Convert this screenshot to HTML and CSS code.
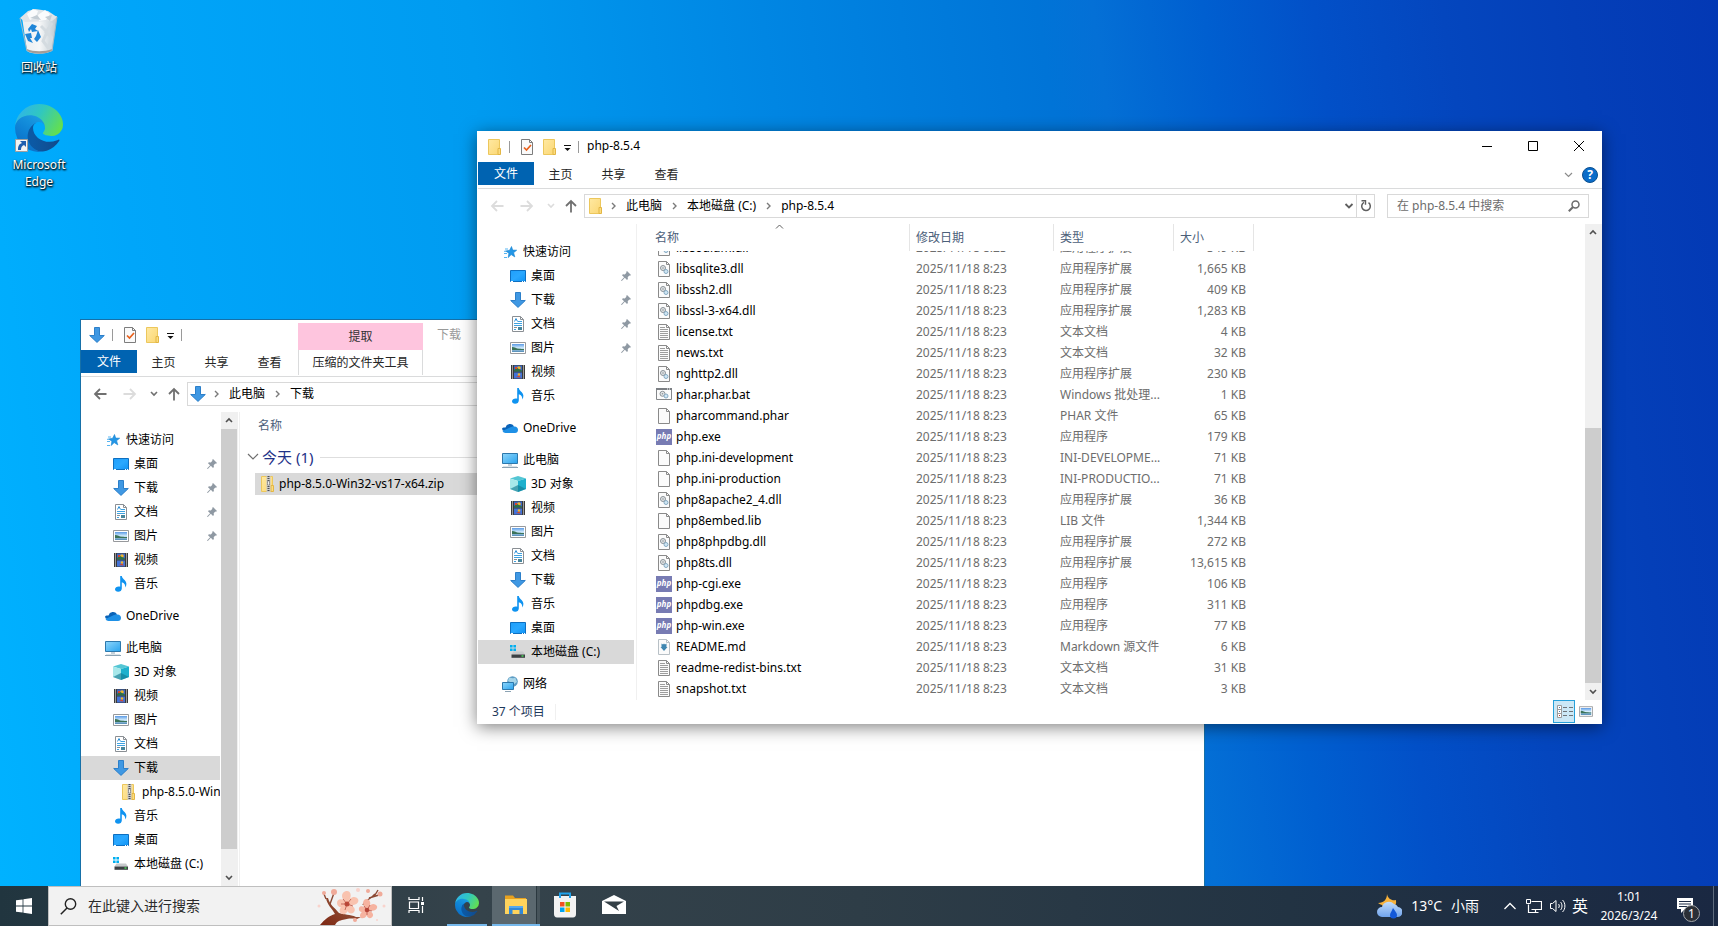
FILE: index.html
```html
<!DOCTYPE html>
<html lang="zh-CN">
<head>
  <meta charset="UTF-8" />
  <meta name="viewport" content="width=device-width, initial-scale=1" />
  <title>桌面</title>
  <link rel="stylesheet" href="styles.css">
</head>
<body>

  <!-- Icon sprite -->
  <svg class="sprite" aria-hidden="true">
    <defs>
      <linearGradient id="g-folder" x1="0" y1="0" x2="1" y2="1"><stop offset="0" stop-color="#ffe9a2"/><stop offset="1" stop-color="#fbd774"/></linearGradient>
      <linearGradient id="g-desk" x1="0" y1="0" x2="1" y2="1"><stop offset="0" stop-color="#1f9ffb"/><stop offset=".5" stop-color="#2aa8ff"/><stop offset="1" stop-color="#0f93f5"/></linearGradient>
      <linearGradient id="g-pic" x1="0" y1="0" x2="0" y2="1"><stop offset="0" stop-color="#5b9ae6"/><stop offset=".5" stop-color="#d3ecfb"/><stop offset="1" stop-color="#4d88b4"/></linearGradient>
      <linearGradient id="g-pc" x1="0" y1="0" x2="1" y2="1"><stop offset="0" stop-color="#8fd6fb"/><stop offset="1" stop-color="#29a3ee"/></linearGradient>
      <linearGradient id="g-edge-a" x1=".2" y1=".5" x2="1" y2=".5"><stop offset="0" stop-color="#0c59a4"/><stop offset="1" stop-color="#114a8b"/></linearGradient>
      <linearGradient id="g-edge-b" x1=".8" y1=".1" x2=".3" y2="1"><stop offset="0" stop-color="#1b9de2"/><stop offset=".5" stop-color="#0f84d6"/><stop offset="1" stop-color="#0b6cc4"/></linearGradient>
      <linearGradient id="g-edge-c" x1="0" y1=".3" x2="1" y2=".7"><stop offset="0" stop-color="#2fb4ea"/><stop offset=".45" stop-color="#30c7c0"/><stop offset="1" stop-color="#66e04a"/></linearGradient>
      <linearGradient id="g-bin" x1="0" y1="0" x2="1" y2="0"><stop offset="0" stop-color="#e9edf0"/><stop offset=".5" stop-color="#f6f7f8"/><stop offset="1" stop-color="#bcc8d0"/></linearGradient>
      <linearGradient id="g-cloud" x1="0" y1="0" x2="0" y2="1"><stop offset="0" stop-color="#c3ddfb"/><stop offset="1" stop-color="#6fa3ec"/></linearGradient>
      <linearGradient id="g-branch" x1="0" y1="1" x2="1" y2="0"><stop offset="0" stop-color="#7d2713"/><stop offset="1" stop-color="#9a6044"/></linearGradient>
    </defs>

    <symbol id="i-folder" viewBox="0 0 16 16">
      <path d="M2.500 .5h11v15h-11z" fill="url(#g-folder)" stroke="#ecc75c"/>
      <path d="M12 9.500h2.500v6H12z" fill="#fbdc7f" stroke="#e3b645"/>
    </symbol>
    <symbol id="i-check" viewBox="0 0 16 16">
      <path d="M2.500 .5h8l3 3v12h-11z" fill="#fafafa" stroke="#7d7d7d"/>
      <path d="M10.500 .5v3h3" fill="none" stroke="#7d7d7d"/>
      <path d="M5 8.500l2.500 2.500L12 6" fill="none" stroke="#e8601c" stroke-width="1.700"/>
    </symbol>
    <symbol id="i-down" viewBox="0 0 16 16">
      <path d="M5.500 .5h5v8h4.800L8 15.400.7 8.500h4.800z" fill="#3f98e3" stroke="#2c7fc9"/>
    </symbol>
    <symbol id="i-star" viewBox="0 0 16 16">
      <path d="M9.500 2.500l1.200 3.600 4 .1-3.100 2.500 1.200 4.200-3.600-2.300-3 3 .7-4.400L3.700 7l4-.8z" fill="#2396e6" stroke="#1583d0" stroke-width=".6"/>
      <path d="M3 5h3M2 9.500h3M2 13.500h3M2 7.300h2" stroke="#56b5f2" fill="none"/>
    </symbol>
    <symbol id="i-desk" viewBox="0 0 16 16">
      <path d="M.5 2.500h15v11H.5z" fill="url(#g-desk)" stroke="#0e6fc0"/>
      <path d="M1 13.500h2m9 0h1m1 0h1" stroke="#fff"/>
    </symbol>
    <symbol id="i-doc" viewBox="0 0 16 16">
      <path d="M2.500 .5h8l3 3v12h-11z" fill="#fff" stroke="#8a8f94"/>
      <path d="M10.500 .5v3h3" fill="none" stroke="#8a8f94"/>
      <path d="M4 7.500h8M4 9.500h8M8 5.500h4M4 13.500h2" stroke="#3fa2e0"/>
      <path d="M4.500 5.500l1.500-3 1.500 3" stroke="#2c8fd6" fill="none"/>
      <path d="M4 11.500h3" stroke="#8a8f94"/><path d="M8 11h4v3H8z" fill="#47859c"/>
    </symbol>
    <symbol id="i-pic" viewBox="0 0 16 16">
      <path d="M.5 2.500h15v11H.5z" fill="#fff" stroke="#97999c"/>
      <path d="M2 4h12v8H2z" fill="url(#g-pic)"/>
      <path d="M2 7c3 0 4 1.500 7 1.800 2 .2 3 .2 5 .2v1H2z" fill="#3b7359"/>
    </symbol>
    <symbol id="i-video" viewBox="0 0 16 16">
      <path d="M1 1h14v14H1z" fill="#3a3a3a"/>
      <path d="M4 1.500h8v6H4z" fill="#3b68c5"/><path d="M4 8.500h8v6H4z" fill="#4273d8"/>
      <circle cx="9" cy="4" r="1.800" fill="#f2b62b"/><path d="M4 6l3-2 5 2.500v1H4z" fill="#2e7145"/><path d="M5 3h2v2H5z" fill="#d8452c"/>
      <circle cx="9" cy="10.500" r="1.300" fill="#f2b62b"/><path d="M6 13l3-1.500 2 2z" fill="#d6482c"/>
      <path d="M2.500 1.500v13M13.500 1.500v13" stroke="#fff" stroke-width="1" stroke-dasharray="1 1"/>
    </symbol>
    <symbol id="i-music" viewBox="0 0 16 16">
      <path d="M7.200 0h1.600c.3 2 1.500 2.700 3 4.200 2 2 2.200 4.800.3 7.300.5-2.700-.6-4.600-3.300-5.300v6.300c0 2-1.600 3.300-3.700 3.300C3.300 15.800 2 14.800 2 13.300c0-2 2.600-3.300 5.200-2.600z" fill="#0f93f0"/>
    </symbol>
    <symbol id="i-onedrive" viewBox="0 0 16 16">
      <path d="M3.500 7.500A4.700 4.700 0 0 1 12 6.200L8 11H2.500A2.500 2.500 0 0 1 0 8.800c.3-1 1.500-1.500 3.500-1.300z" fill="#0a63b8"/>
      <path d="M12.500 6.500a3.300 3.300 0 0 1 3.500 3.400 3.300 3.300 0 0 1-3 3.100H3.500A3.400 3.400 0 0 1 .5 11l7-3.200c1.300-1 3-1.600 5-1.300z" fill="#1e90e6"/>
    </symbol>
    <symbol id="i-pc" viewBox="0 0 16 16">
      <path d="M.5 1.500h15v10H.5z" fill="url(#g-pc)" stroke="#2d78ac"/>
      <path d="M6 13h4M0 15.500h16" stroke="#8ca3b3"/><path d="M1 14.500h14" stroke="#dbe3e8"/>
    </symbol>
    <symbol id="i-cube" viewBox="0 0 16 16">
      <path d="M8 0l8 2.500L8 5 0 2.500z" fill="#54c6d4"/>
      <path d="M0 2.500L8 5v11L0 13z" fill="#a7e8ea"/>
      <path d="M16 2.500L8 5v11l8-3z" fill="#1eb0cd"/>
      <path d="M0 13l8-4v7zM16 13L8 9v7z" fill="#137d94" opacity=".65"/>
    </symbol>
    <symbol id="i-drive" viewBox="0 0 16 16">
      <path d="M0 1h2.600v2.600H0zM3.400 1H6v2.600H3.400zM0 4.400h2.600V7H0zM3.400 4.400H6V7H3.400z" fill="#00aff0"/>
      <path d="M3.500 7.500H13l2 3H1.500z" fill="#c7cacc"/><path d="M1.500 10.500H15v3.300H1.500z" fill="#3c4144"/>
      <path d="M11.500 12h2" stroke="#4be35a" stroke-width="1.400"/>
    </symbol>
    <symbol id="i-net" viewBox="0 0 16 16">
      <circle cx="10.500" cy="5.500" r="5.300" fill="#5c9cc4"/><path d="M7 2c2-1 3 1 5 0s2 2 3 4c-2 1-3 3-4 2S8 6 6 5z" fill="#a6d4e8"/>
      <path d="M.5 6.500h11v7H.5z" fill="url(#g-pc)" stroke="#2d78ac"/><path d="M3 15.500h6" stroke="#8ca3b3"/>
    </symbol>
    <symbol id="i-zip" viewBox="0 0 16 16">
      <path d="M1.500 .5h11v15h-11z" fill="url(#g-folder)" stroke="#ecc75c"/>
      <path d="M11 9.500h2.500v6H11z" fill="#fbdc7f" stroke="#e3b645"/>
      <path d="M6.500 0h4v16h-4z" fill="#c9c9c9"/>
      <path d="M8.500 0v16" stroke="#505050" stroke-width="2" stroke-dasharray="1 1"/><path d="M7.500 5h2v4h-2z" fill="#eee" stroke="#777" stroke-width=".6"/>
    </symbol>
    <symbol id="i-pin" viewBox="0 0 10 10">
      <path d="M6 0l4 4-1 .8-.7-.2-1.600 1.600.2 1.900-.9.900-2.200-2.200L.8 10 0 9.400l3.100-3.200L1 4.200l.9-.9 1.900.1 1.600-1.600-.2-.8z" fill="#8f99a3"/>
    </symbol>
    <symbol id="i-page" viewBox="0 0 16 16">
      <path d="M2.500 .5h8l3 3v12h-11z" fill="#fbfbfb" stroke="#8a8a8a"/><path d="M10.500 .5v3h3" fill="none" stroke="#8a8a8a"/>
    </symbol>
    <symbol id="i-txt" viewBox="0 0 16 16">
      <path d="M2.500 .5h8l3 3v12h-11z" fill="#fbfbfb" stroke="#8a8a8a"/><path d="M10.500 .5v3h3" fill="none" stroke="#8a8a8a"/>
      <path d="M4 3.500h5M4 5.500h8M4 7.500h8M4 9.500h8M4 11.500h8M4 13.500h8" stroke="#9d9d9d"/>
    </symbol>
    <symbol id="i-dll" viewBox="0 0 16 16">
      <path d="M2.500 .5h8l3 3v12h-11z" fill="#fbfbfb" stroke="#8a8a8a"/><path d="M10.500 .5v3h3" fill="none" stroke="#8a8a8a"/>
      <circle cx="7" cy="7" r="2.500" fill="#e3e6e8" stroke="#8b9297"/><circle cx="7" cy="7" r=".8" fill="#8b9297"/>
      <circle cx="10" cy="10.500" r="2" fill="#cfe5f3" stroke="#85a9c2"/>
    </symbol>
    <symbol id="i-bat" viewBox="0 0 16 16">
      <path d="M.5 1.500h15v11H.5z" fill="#fbfbfb" stroke="#85888b"/><path d="M0 2h16" stroke="#7b7f83" stroke-width="2"/><path d="M11 2h1m1 0h1" stroke="#fff"/>
      <circle cx="6.500" cy="6.800" r="2.500" fill="#e3e6e8" stroke="#8b9297"/><circle cx="6.500" cy="6.800" r=".8" fill="#8b9297"/>
      <circle cx="10" cy="9" r="2" fill="#cfe5f3" stroke="#85a9c2"/>
    </symbol>
    <symbol id="i-md" viewBox="0 0 16 16">
      <path d="M2.500 .5h8l3 3v12h-11z" fill="#fbfbfb" stroke="#b8c0c6"/><path d="M10.500 .5v3h3" fill="none" stroke="#b8c0c6"/>
      <path d="M5.500 4.500l1.500 1 1-1 1 1 1.500-1V8h1l-3.500 4L4.500 8h1z" fill="#3f86b0"/>
    </symbol>
    <symbol id="i-chev" viewBox="0 0 5 8"><path d="M1 1l3 3-3 3" fill="none" stroke="#7a7a7a" stroke-width="1.400"/></symbol>
    <symbol id="i-arrow" viewBox="0 0 14 12"><path d="M13.500 6H2M7 1L2 6l5 5" fill="none" stroke="currentColor" stroke-width="1.800"/></symbol>
    <symbol id="i-caret-down" viewBox="0 0 8 8"><path d="M1 2l3 3 3-3" fill="none" stroke="currentColor" stroke-width="1.600"/></symbol>
    <symbol id="i-quick" viewBox="0 0 8 8"><path d="M1 2.500h7" stroke="#111"/><path d="M1.500 5h6l-3 3z" fill="#111"/></symbol>
    <symbol id="i-edge" viewBox="0 0 256 256">
      <g transform="translate(-4.630 -4.920)">
        <path d="M235.680 195.460a93.730 93.730 0 0 1-10.540 4.710 101.870 101.870 0 0 1-35.900 6.460c-47.320 0-88.540-32.550-88.540-74.320A31.480 31.480 0 0 1 117.130 105c-42.800 1.800-53.800 46.400-53.800 72.530 0 73.880 68.090 81.370 82.760 81.370 7.910 0 19.840-2.300 27-4.560l1.310-.44a128.340 128.340 0 0 0 66.600-52.800 4 4 0 0 0-5.320-5.640z" fill="url(#g-edge-a)"/>
        <path d="M110.340 246.340A79.200 79.200 0 0 1 87.600 225a80.720 80.720 0 0 1 29.530-120c3.120-1.470 8.450-4.130 15.540-4a32.350 32.350 0 0 1 25.690 13 31.880 31.880 0 0 1 6.360 18.660c0-.21 24.460-79.600-80-79.600-43.900 0-80 41.660-80 78.210a130.150 130.150 0 0 0 12.110 56 128 128 0 0 0 156.380 67.110 75.550 75.550 0 0 1-62.780-8z" fill="url(#g-edge-b)"/>
        <path d="M156.940 153.780c-.81 1.050-3.300 2.500-3.300 5.660 0 2.610 1.700 5.120 4.720 7.230 14.380 10 41.490 8.680 41.560 8.680a59.560 59.560 0 0 0 30.270-8.350 61.380 61.380 0 0 0 30.430-52.880c.26-22.410-8-37.310-11.340-43.910-21.190-41.450-66.930-65.290-116.670-65.290a128 128 0 0 0-128 126.200c.48-36.540 36.800-66.050 80-66.050 3.500 0 23.460.34 42 10.070 16.340 8.580 24.900 18.940 30.850 29.210 6.180 10.670 7.280 24.150 7.280 29.520s-2.740 13.330-7.800 19.910z" fill="url(#g-edge-c)"/>
      </g>
    </symbol>
  </svg>

  <main class="desktop">

    <!-- Desktop shortcuts -->
    <div class="shortcuts">
      <a class="shortcut" href="#">
        <svg class="shortcut-icon" viewBox="0 0 48 48">
          <path d="M7 10l35-1-5 35c-5 3-20 4-25 0z" fill="url(#g-bin)"/>
          <path d="M5 11l8-7 7-2 7 1 6 1 9 6-5 4-27 1z" fill="#dfe4e8"/>
          <path d="M12 7l6-5 5 2-2 6-6 3zM23 8l7-5 5 4-4 6-7 1z" fill="#fafbfc"/>
          <path d="M15 11l7-3 4 5zM30 10l7-2-2 6z" fill="#c3ccd3"/>
          <path d="M26 19l6 6-4 9 6 8M37 16l-6 9 6 6-4 10" fill="none" stroke="#d4dbe0" stroke-width="3"/>
          <path d="M12 42c6 3 18 3 25 0v2c-6 3-18 4-25 0z" fill="#a39d98"/>
          <path d="M5 11l7 33M42 10l-5 34" stroke="#a9bac6" fill="none"/>
          <path d="M13 22l4-5 5 2-2 3 3 2-6 1-1-3-2 3zM23 23l3 7-4 5-3-3 2-3zM10 27l6-1 1 5-2 0 3 5-5-2z" fill="#1f86d8"/>
        </svg>
        <span>回收站</span>
      </a>
      <a class="shortcut" href="#">
        <svg class="shortcut-icon" viewBox="0 0 48 48">
          <use href="#i-edge" width="48" height="48"/>
          <path d="M.5 35.500h12v12H.5z" fill="#f4f4f4" stroke="#9f9f9f"/>
          <path d="M3 46c0-4 1-6 4-7l-2-2h6v6l-2-2c-2 1-3 2-3 5z" fill="#1f5faf"/>
        </svg>
        <span>Microsoft Edge</span>
      </a>
    </div>

    <!-- Downloads window -->
    <section class="window window-downloads" aria-label="下载">
      <header class="titlebar">
        <div class="quick-access">
          <svg class="icon"><use href="#i-down"/></svg>
          <i class="sep"></i>
          <svg class="icon"><use href="#i-check"/></svg>
          <svg class="icon"><use href="#i-folder"/></svg>
          <svg class="icon-8"><use href="#i-quick"/></svg>
          <i class="sep"></i>
        </div>
        <div class="context-label">提取</div>
        <h1 class="title">下载</h1>
      </header>
      <div class="ribbon">
        <button class="tab tab-file">文件</button>
        <button class="tab">主页</button>
        <button class="tab">共享</button>
        <button class="tab">查看</button>
        <button class="tab tab-context">压缩的文件夹工具</button>
      </div>
      <div class="toolbar">
        <button class="nav-btn" aria-label="返回"><svg><use href="#i-arrow"/></svg></button>
        <button class="nav-btn forward off" aria-label="前进"><svg><use href="#i-arrow"/></svg></button>
        <button class="nav-btn recent" aria-label="最近"><svg><use href="#i-caret-down"/></svg></button>
        <button class="nav-btn up" aria-label="向上"><svg><use href="#i-arrow"/></svg></button>
        <div class="address">
          <svg class="icon"><use href="#i-down"/></svg>
          <svg class="chev"><use href="#i-chev"/></svg>
          <span>此电脑</span>
          <svg class="chev"><use href="#i-chev"/></svg>
          <span>下载</span>
        </div>
      </div>
      <div class="panes">
        <nav class="tree">
          <ul>
            <li><a class="root" href="#"><svg class="icon"><use href="#i-star"/></svg>快速访问</a></li>
            <li><a href="#"><svg class="icon"><use href="#i-desk"/></svg>桌面<svg class="pin"><use href="#i-pin"/></svg></a></li>
            <li><a href="#"><svg class="icon"><use href="#i-down"/></svg>下载<svg class="pin"><use href="#i-pin"/></svg></a></li>
            <li><a href="#"><svg class="icon"><use href="#i-doc"/></svg>文档<svg class="pin"><use href="#i-pin"/></svg></a></li>
            <li><a href="#"><svg class="icon"><use href="#i-pic"/></svg>图片<svg class="pin"><use href="#i-pin"/></svg></a></li>
            <li><a href="#"><svg class="icon"><use href="#i-video"/></svg>视频</a></li>
            <li><a href="#"><svg class="icon"><use href="#i-music"/></svg>音乐</a></li>
          </ul>
          <ul>
            <li><a class="root" href="#"><svg class="icon"><use href="#i-onedrive"/></svg>OneDrive</a></li>
          </ul>
          <ul>
            <li><a class="root" href="#"><svg class="icon"><use href="#i-pc"/></svg>此电脑</a></li>
            <li><a href="#"><svg class="icon"><use href="#i-cube"/></svg>3D 对象</a></li>
            <li><a href="#"><svg class="icon"><use href="#i-video"/></svg>视频</a></li>
            <li><a href="#"><svg class="icon"><use href="#i-pic"/></svg>图片</a></li>
            <li><a href="#"><svg class="icon"><use href="#i-doc"/></svg>文档</a></li>
            <li><a class="selected" href="#"><svg class="icon"><use href="#i-down"/></svg>下载</a></li>
            <li><a class="child" href="#"><svg class="icon"><use href="#i-zip"/></svg>php-8.5.0-Win32-vs17-x64.zip</a></li>
            <li><a href="#"><svg class="icon"><use href="#i-music"/></svg>音乐</a></li>
            <li><a href="#"><svg class="icon"><use href="#i-desk"/></svg>桌面</a></li>
            <li><a href="#"><svg class="icon"><use href="#i-drive"/></svg>本地磁盘 (C:)</a></li>
          </ul>
        </nav>
        <div class="scrollbar">
          <button class="up" aria-label="向上滚动"><svg><use href="#i-caret-down"/></svg></button>
          <div class="thumb thumb-tree"></div>
          <button aria-label="向下滚动"><svg><use href="#i-caret-down"/></svg></button>
        </div>
        <div class="downloads">
          <div class="column-name">名称</div>
          <div class="group">
            <svg viewBox="0 0 12 8"><path d="M1 1l5 5 5-5" fill="none" stroke="#6f6f6f" stroke-width="1.200"/></svg>
            <h2>今天 (1)</h2>
          </div>
          <div class="download-row"><svg class="icon"><use href="#i-zip"/></svg>php-8.5.0-Win32-vs17-x64.zip</div>
        </div>
      </div>
    </section>

    <!-- php-8.5.4 window -->
    <section class="window window-php" aria-label="php-8.5.4">
      <header class="titlebar">
        <div class="quick-access">
          <svg class="icon"><use href="#i-folder"/></svg>
          <i class="sep"></i>
          <svg class="icon"><use href="#i-check"/></svg>
          <svg class="icon"><use href="#i-folder"/></svg>
          <svg class="icon-8"><use href="#i-quick"/></svg>
          <i class="sep"></i>
        </div>
        <h1 class="title">php-8.5.4</h1>
        <div class="window-buttons">
          <button aria-label="最小化"><svg viewBox="0 0 10 10"><path d="M0 5.500h10" stroke="#000"/></svg></button>
          <button aria-label="最大化"><svg viewBox="0 0 10 10"><path d="M.5 .5h9v9h-9z" fill="none" stroke="#000"/></svg></button>
          <button aria-label="关闭"><svg viewBox="0 0 10 10"><path d="M0 0l10 10M10 0L0 10" stroke="#000"/></svg></button>
        </div>
      </header>
      <div class="ribbon">
        <button class="tab tab-file">文件</button>
        <button class="tab">主页</button>
        <button class="tab">共享</button>
        <button class="tab">查看</button>
        <button class="expand" aria-label="展开功能区"><svg viewBox="0 0 9 6"><path d="M1 1l3.500 3.500L8 1" fill="none" stroke="#8b8b8b" stroke-width="1.200"/></svg></button>
        <button class="help" aria-label="帮助">?</button>
      </div>
      <div class="toolbar">
        <button class="nav-btn off" aria-label="返回"><svg><use href="#i-arrow"/></svg></button>
        <button class="nav-btn forward off" aria-label="前进"><svg><use href="#i-arrow"/></svg></button>
        <button class="nav-btn recent off" aria-label="最近"><svg><use href="#i-caret-down"/></svg></button>
        <button class="nav-btn up" aria-label="向上"><svg><use href="#i-arrow"/></svg></button>
        <div class="address">
          <svg class="icon"><use href="#i-folder"/></svg>
          <svg class="chev"><use href="#i-chev"/></svg>
          <span>此电脑</span>
          <svg class="chev"><use href="#i-chev"/></svg>
          <span>本地磁盘 (C:)</span>
          <svg class="chev"><use href="#i-chev"/></svg>
          <span>php-8.5.4</span>
          <button class="history" aria-label="历史记录"><svg viewBox="0 0 10 8"><path d="M1.500 2L5 5.500 8.500 2" fill="none" stroke="#5f5f5f" stroke-width="1.800"/></svg></button>
          <button class="refresh" aria-label="刷新"><svg viewBox="0 0 12 12"><path d="M8.500 2.700A4.300 4.300 0 1 1 4 2.400" fill="none" stroke="#5f5f5f" stroke-width="1.500"/><path d="M1.500 .8h4v4" fill="none" stroke="#5f5f5f" stroke-width="1.400"/></svg></button>
        </div>
        <div class="search">
          <input type="text" id="folder-search" placeholder="在 php-8.5.4 中搜索" aria-label="在 php-8.5.4 中搜索">
          <svg viewBox="0 0 12 12"><circle cx="7.500" cy="4.500" r="3.500" fill="none" stroke="#6c6c6c" stroke-width="1.500"/><path d="M5 7L.8 11.200" stroke="#6c6c6c" stroke-width="2"/></svg>
        </div>
      </div>
      <div class="panes">
        <nav class="tree">
          <ul>
            <li><a class="root" href="#"><svg class="icon"><use href="#i-star"/></svg>快速访问</a></li>
            <li><a href="#"><svg class="icon"><use href="#i-desk"/></svg>桌面<svg class="pin"><use href="#i-pin"/></svg></a></li>
            <li><a href="#"><svg class="icon"><use href="#i-down"/></svg>下载<svg class="pin"><use href="#i-pin"/></svg></a></li>
            <li><a href="#"><svg class="icon"><use href="#i-doc"/></svg>文档<svg class="pin"><use href="#i-pin"/></svg></a></li>
            <li><a href="#"><svg class="icon"><use href="#i-pic"/></svg>图片<svg class="pin"><use href="#i-pin"/></svg></a></li>
            <li><a href="#"><svg class="icon"><use href="#i-video"/></svg>视频</a></li>
            <li><a href="#"><svg class="icon"><use href="#i-music"/></svg>音乐</a></li>
          </ul>
          <ul>
            <li><a class="root" href="#"><svg class="icon"><use href="#i-onedrive"/></svg>OneDrive</a></li>
          </ul>
          <ul>
            <li><a class="root" href="#"><svg class="icon"><use href="#i-pc"/></svg>此电脑</a></li>
            <li><a href="#"><svg class="icon"><use href="#i-cube"/></svg>3D 对象</a></li>
            <li><a href="#"><svg class="icon"><use href="#i-video"/></svg>视频</a></li>
            <li><a href="#"><svg class="icon"><use href="#i-pic"/></svg>图片</a></li>
            <li><a href="#"><svg class="icon"><use href="#i-doc"/></svg>文档</a></li>
            <li><a href="#"><svg class="icon"><use href="#i-down"/></svg>下载</a></li>
            <li><a href="#"><svg class="icon"><use href="#i-music"/></svg>音乐</a></li>
            <li><a href="#"><svg class="icon"><use href="#i-desk"/></svg>桌面</a></li>
            <li><a class="selected" href="#"><svg class="icon"><use href="#i-drive"/></svg>本地磁盘 (C:)</a></li>
          </ul>
          <ul>
            <li><a class="root" href="#"><svg class="icon"><use href="#i-net"/></svg>网络</a></li>
          </ul>
        </nav>
        <table class="files">
          <thead>
            <tr><th class="sorted">名称<svg viewBox="0 0 9 5"><path d="M1 4.500L4.500 1 8 4.500" fill="none" stroke="#5f5f5f"/></svg></th><th>修改日期</th><th>类型</th><th>大小</th></tr>
          </thead>
          <tbody>
            <tr><td><svg class="icon"><use href="#i-dll"/></svg>libsodium.dll</td><td>2025/11/18 8:23</td><td>应用程序扩展</td><td>349 KB</td></tr>
            <tr><td><svg class="icon"><use href="#i-dll"/></svg>libsqlite3.dll</td><td>2025/11/18 8:23</td><td>应用程序扩展</td><td>1,665 KB</td></tr>
            <tr><td><svg class="icon"><use href="#i-dll"/></svg>libssh2.dll</td><td>2025/11/18 8:23</td><td>应用程序扩展</td><td>409 KB</td></tr>
            <tr><td><svg class="icon"><use href="#i-dll"/></svg>libssl-3-x64.dll</td><td>2025/11/18 8:23</td><td>应用程序扩展</td><td>1,283 KB</td></tr>
            <tr><td><svg class="icon"><use href="#i-txt"/></svg>license.txt</td><td>2025/11/18 8:23</td><td>文本文档</td><td>4 KB</td></tr>
            <tr><td><svg class="icon"><use href="#i-txt"/></svg>news.txt</td><td>2025/11/18 8:23</td><td>文本文档</td><td>32 KB</td></tr>
            <tr><td><svg class="icon"><use href="#i-dll"/></svg>nghttp2.dll</td><td>2025/11/18 8:23</td><td>应用程序扩展</td><td>230 KB</td></tr>
            <tr><td><svg class="icon"><use href="#i-bat"/></svg>phar.phar.bat</td><td>2025/11/18 8:23</td><td>Windows 批处理...</td><td>1 KB</td></tr>
            <tr><td><svg class="icon"><use href="#i-page"/></svg>pharcommand.phar</td><td>2025/11/18 8:23</td><td>PHAR 文件</td><td>65 KB</td></tr>
            <tr><td><b class="php-icon">php</b>php.exe</td><td>2025/11/18 8:23</td><td>应用程序</td><td>179 KB</td></tr>
            <tr><td><svg class="icon"><use href="#i-page"/></svg>php.ini-development</td><td>2025/11/18 8:23</td><td>INI-DEVELOPME...</td><td>71 KB</td></tr>
            <tr><td><svg class="icon"><use href="#i-page"/></svg>php.ini-production</td><td>2025/11/18 8:23</td><td>INI-PRODUCTIO...</td><td>71 KB</td></tr>
            <tr><td><svg class="icon"><use href="#i-dll"/></svg>php8apache2_4.dll</td><td>2025/11/18 8:23</td><td>应用程序扩展</td><td>36 KB</td></tr>
            <tr><td><svg class="icon"><use href="#i-page"/></svg>php8embed.lib</td><td>2025/11/18 8:23</td><td>LIB 文件</td><td>1,344 KB</td></tr>
            <tr><td><svg class="icon"><use href="#i-dll"/></svg>php8phpdbg.dll</td><td>2025/11/18 8:23</td><td>应用程序扩展</td><td>272 KB</td></tr>
            <tr><td><svg class="icon"><use href="#i-dll"/></svg>php8ts.dll</td><td>2025/11/18 8:23</td><td>应用程序扩展</td><td>13,615 KB</td></tr>
            <tr><td><b class="php-icon">php</b>php-cgi.exe</td><td>2025/11/18 8:23</td><td>应用程序</td><td>106 KB</td></tr>
            <tr><td><b class="php-icon">php</b>phpdbg.exe</td><td>2025/11/18 8:23</td><td>应用程序</td><td>311 KB</td></tr>
            <tr><td><b class="php-icon">php</b>php-win.exe</td><td>2025/11/18 8:23</td><td>应用程序</td><td>77 KB</td></tr>
            <tr><td><svg class="icon"><use href="#i-md"/></svg>README.md</td><td>2025/11/18 8:23</td><td>Markdown 源文件</td><td>6 KB</td></tr>
            <tr><td><svg class="icon"><use href="#i-txt"/></svg>readme-redist-bins.txt</td><td>2025/11/18 8:23</td><td>文本文档</td><td>31 KB</td></tr>
            <tr><td><svg class="icon"><use href="#i-txt"/></svg>snapshot.txt</td><td>2025/11/18 8:23</td><td>文本文档</td><td>3 KB</td></tr>
          </tbody>
        </table>
        <div class="scrollbar">
          <button class="up" aria-label="向上滚动"><svg><use href="#i-caret-down"/></svg></button>
          <div class="thumb thumb-files"></div>
          <button aria-label="向下滚动"><svg><use href="#i-caret-down"/></svg></button>
        </div>
      </div>
      <footer class="status">
        <span>37 个项目</span>
        <button class="view active" aria-label="详细信息">
          <svg viewBox="0 0 18 14"><path d="M2.500 .5h4v12h-4zM2.500 4.500h4M2.500 8.500h4" fill="#fff" stroke="#9b9b9b"/><path d="M4 2.500h1M4 6.500h1" stroke="#4a7bb0"/><path d="M4 10.500h1" stroke="#c0392b"/><path d="M8 2.500h4M14 2.500h4M8 6.500h4M14 6.500h4M8 10.500h4M14 10.500h4" stroke="#6f7478"/></svg>
        </button>
        <button class="view" aria-label="大缩略图"><svg viewBox="0 2 16 12"><use href="#i-pic" width="16" height="16"/></svg></button>
      </footer>
    </section>
  </main>

  <!-- Taskbar -->
  <footer class="taskbar">
    <button class="start" aria-label="开始">
      <svg viewBox="0 0 16 16"><path d="M0 2.300L6.600 1.400v6.200H0zM7.400 1.300L16 0v7.600H7.400zM0 8.400h6.600v6.200L0 13.700zM7.400 8.400H16V16l-8.600-1.300z" fill="#fff"/></svg>
    </button>
    <div class="task-search">
      <svg class="glass" viewBox="0 0 17 17"><circle cx="10.500" cy="6" r="5.200" fill="none" stroke="#222" stroke-width="1.400"/><path d="M7 10L.8 16.200" stroke="#222" stroke-width="1.500"/></svg>
      <input type="text" id="task-search" placeholder="在此键入进行搜索" aria-label="在此键入进行搜索">
      <svg class="blossom" viewBox="0 0 70 38">
        <path d="M3 38c5-6 9-9 15-11C15 21 10 18 9 11l2 0c2 7 6 9 11 15 5 2 11 1 17 4l5 0-4 2c-7-1-10 0-15 1-4 1-5 2-7 5z" fill="url(#g-branch)"/>
        <path d="M13 17l4-11M46 18c2-5 8-6 12-11M52 11l10-3M58 8l3-5M9 12L7 7" fill="none" stroke="#8b4a35" stroke-width="1.400"/>
        <g fill="#f9c3af"><path d="M30 16c-7-4-6-11-1-12 5-1 7 6 1 12z"/><path d="M30 17c-4 6-10 3-10-1 0-5 7-5 10 1z"/><path d="M30 17c3 7-1 11-5 10-5-2-2-9 5-10z"/><path d="M30 17c7 1 10 6 6 9-4 2-8-3-6-9z"/><path d="M30 17c2-7 8-9 11-5 2 4-4 8-11 5z"/></g>
        <g fill="#f6b3a0"><path d="M50 23c-5-4-5-10-1-11 5 0 6 6 1 11z"/><path d="M50 23c-4 4-9 2-8-2 1-3 6-2 8 2z"/><path d="M50 23c1 6-2 9-6 8-3-3 1-8 6-8z"/><path d="M50 23c6 1 8 6 4 8-4 1-6-4-4-8z"/><path d="M50 23c2-6 7-8 10-4 1 4-4 6-10 4z"/></g>
        <circle cx="30" cy="17" r="2.500" fill="#c24a3a"/><path d="M30 17l-4-5m4 5l4-5m-4 5l-2 6m2-6l6 2m-6-2l-6 0" stroke="#b0463a" stroke-width=".7" fill="none"/>
        <circle cx="50" cy="23" r="2.300" fill="#b94336"/><path d="M50 23l-3-4m3 4l3-5m-3 5l0 5m0-5l5 1" stroke="#b0463a" stroke-width=".7" fill="none"/>
        <g fill="#f0ab9a"><circle cx="17" cy="5" r="3"/><circle cx="7" cy="6" r="2"/><circle cx="51" cy="4" r="2"/><circle cx="63" cy="7" r="2.500"/><circle cx="38" cy="33" r="2"/></g>
        <g fill="#f9d3cc"><circle cx="41" cy="3" r="2"/><circle cx="2" cy="19" r="1.500"/><circle cx="67" cy="19" r="1.500"/><circle cx="60" cy="33" r="1"/></g>
      </svg>
    </div>
    <button class="task" aria-label="任务视图">
      <svg class="task-view" viewBox="0 0 17 16"><path d="M1 0v2.500h10V0M1.500 5h9v6.500h-9zM1 16v-2.500h10V16M14.500 0v4M14.500 9v7" fill="none" stroke="#fff" stroke-width="1.200"/><path d="M13 5h3v3h-3z" fill="#fff"/></svg>
    </button>
    <button class="task running" aria-label="Microsoft Edge"><svg><use href="#i-edge"/></svg></button>
    <button class="task running current" aria-label="文件资源管理器">
      <svg viewBox="0 0 24 24"><path d="M1 2.500h8l2 2.500h11v5H1z" fill="#e9a21f"/><path d="M1 6h22v15H1z" fill="#ffd35c"/><path d="M5 21v-8h14v8h-3.500v-4h-7v4z" fill="#3288d8"/><path d="M5 13h14v2H5z" fill="#56a9ee"/></svg>
    </button>
    <button class="task" aria-label="Microsoft Store">
      <svg viewBox="0 0 24 26"><path d="M7 6V1.500h10V6" fill="none" stroke="#1fa2ec" stroke-width="2"/><path d="M1 4h22v18c0 2-1 3.500-3 3.500H4c-2 0-3-1.500-3-3.500z" fill="#f2f2f2"/><path d="M7 6V2m10 4V2" stroke="#1fa2ec" stroke-width="2"/><path d="M7 10h4.500v4.500H7z" fill="#f25022"/><path d="M12.500 10H17v4.500h-4.500z" fill="#7fba00"/><path d="M7 15.500h4.500V20H7z" fill="#00a4ef"/><path d="M12.500 15.500H17V20h-4.500z" fill="#ffb900"/></svg>
    </button>
    <button class="task" aria-label="邮件">
      <svg viewBox="0 0 24 24"><path d="M0 8l12-6 12 6v13H0z" fill="#fff"/><path d="M2 8.500h20L14.500 13l2.500 5z" fill="#333f46"/></svg>
    </button>

    <div class="tray">
      <button class="weather">
        <svg viewBox="0 0 25 25"><path d="M10 0c1 5 5 7 9 6a7.500 7.500 0 0 1-14 5c-2-1-3-1-4-2 6 0 9-4 9-9z" fill="#f7b23b"/><path d="M5 23a5 5 0 0 1 0-10 7 7 0 0 1 12-3 6 6 0 0 1 4 3 5 5 0 0 1-1 10z" fill="url(#g-cloud)"/><path d="M16 14c2 3 4 5 4 7a3.500 3.500 0 0 1-7 0c0-2 2-4 3-7z" fill="#1258d8"/></svg>
        <span>13°C</span><span>小雨</span>
      </button>
      <button class="tray-icon" aria-label="显示隐藏的图标"><svg viewBox="0 0 16 16"><path d="M2.500 11L8 5.500l5.500 5.500" fill="none" stroke="#fff" stroke-width="1.300"/></svg></button>
      <button class="tray-icon" aria-label="网络"><svg viewBox="0 0 16 16"><path d="M5.500 3.500h10v8h-10M5.500 14.500h7M9.500 12v2.500M2.500 6.500v8h3" fill="none" stroke="#fff" stroke-width="1.200"/><path d="M.5 1.500h4v4h-4z" fill="#1c2b45" stroke="#fff"/></svg></button>
      <button class="tray-icon" aria-label="音量"><svg viewBox="0 0 16 16"><path d="M.5 5.500h2L6 2.500v11l-3.500-3h-2z" fill="none" stroke="#fff"/><path d="M8.500 6c1 1 1 3 0 4M10.500 4c2 2 2 6 0 8M12.500 2c3.200 3 3.200 9 0 12" fill="none" stroke="#fff"/></svg></button>
      <button class="ime">英</button>
      <button class="clock"><span>1:01</span><span>2026/3/24</span></button>
      <button class="notify" aria-label="通知">
        <svg viewBox="0 0 16 16"><path d="M0 0h16v11H8l-4 4v-4H0z" fill="#fff"/><path d="M2 3.500h12M2 6h12M2 8.500h8" stroke="#1c2b45"/></svg>
        <span class="badge">1</span>
      </button>
    </div>
  </footer>

</body>
</html>
```

FILE: styles.css
```css
* {
  box-sizing: border-box;
}
body {
  display: flex;
  flex-direction: column;
  height: 100vh;
  margin: 0;
  overflow: hidden;
  font-family: "Noto Sans", "Noto Sans CJK SC", sans-serif;
  font-size: 12px;
  line-height: 16px;
  color: #000;
}
button, input {
  margin: 0;
  padding: 0;
  border: none;
  background: none;
  font: inherit;
  color: inherit;
}
button {
  display: flex;
  align-items: center;
  justify-content: center;
}
a {
  color: inherit;
  text-decoration: none;
}
svg {
  display: block;
  flex: none;
}
.sprite {
  position: absolute;
  width: 0;
  height: 0;
}
.icon {
  width: 16px;
  height: 16px;
}
.icon-8 {
  width: 8px;
  height: 8px;
}

/* Desktop */
.desktop {
  position: relative;
  flex: 1;
  min-height: 0;
  overflow: hidden;
  background: linear-gradient(82deg, #00b2ff 0%, #00a6fa 12%, #009bf0 32%, #0086e3 48%, #0074d7 63%, #0470d6 66%, #005fd0 72%, #0250c8 78%, #0446be 85%, #043fb8 92%, #0338b4 100%);
}
.shortcuts {
  display: flex;
  flex-direction: column;
  gap: 28px;
  width: 78px;
  padding-top: 7px;
}
.shortcut {
  display: flex;
  flex-direction: column;
  align-items: center;
  gap: 4px;
  color: #fff;
  line-height: 17px;
  text-align: center;
  text-shadow: 0 1px 2px #000, 1px 1px 2px #000;
}
.shortcut-icon {
  width: 48px;
  height: 48px;
}

/* Windows */
.window {
  position: absolute;
  display: flex;
  flex-direction: column;
  background: #fff;
}
.window-downloads {
  left: 80px;
  top: 319px;
  bottom: 0;
  width: 1125px;
  border: 1px solid #1670a8;
  border-bottom: none;
  overflow: hidden;
}
.window-php {
  left: 477px;
  top: 131px;
  width: 1125px;
  border-left: 1px solid #fff;
  box-shadow: 0 3px 16px rgba(0, 0, 0, 0.5);
}
.window-php .titlebar {
  height: 31px;
}
.titlebar {
  display: flex;
  height: 30px;
}
.quick-access {
  display: flex;
  align-items: center;
  gap: 6px;
  padding-left: 8px;
}
.quick-access .sep {
  width: 1px;
  height: 12px;
  margin-left: 1px;
  background: #9a9a9a;
}
.quick-access .sep + .icon {
  margin-left: 3px;
}
.window-downloads .quick-access {
  width: 217px;
}
.title {
  margin: 0;
  padding-left: 8px;
  font-size: 12px;
  font-weight: normal;
  line-height: 30px;
}
.window-downloads .title {
  padding-left: 14px;
  color: #999;
}
.context-label {
  width: 125px;
  margin-top: 3px;
  background: #fec5de;
  color: #333;
  line-height: 27px;
  text-align: center;
}
.window-buttons {
  display: flex;
  margin-left: auto;
}
.window-buttons button {
  width: 46px;
  height: 30px;
}
.window-buttons svg {
  width: 10px;
  height: 10px;
}
.ribbon {
  display: flex;
  height: 27px;
  border-bottom: 1px solid #dadbdc;
}
.tab {
  width: 53px;
  height: 25px;
  color: #262626;
}
.tab-file {
  width: 56px;
  height: 23px;
  background: #0063b1;
  color: #fff;
}
.tab-context {
  width: 125px;
  margin-left: 2px;
  border: 1px solid #dadbdc;
  border-width: 0 1px;
}
.expand {
  width: 24px;
  margin-left: auto;
}
.expand svg {
  width: 9px;
  height: 6px;
}
.help {
  align-self: center;
  width: 16px;
  height: 16px;
  margin: 0 4px 0 2px;
  border: 1px solid #0a4f8f;
  border-radius: 50%;
  background: #0a6cc9;
  color: #fff;
  font-weight: bold;
}

/* Address row */
.toolbar {
  display: flex;
  align-items: center;
  height: 35px;
  padding: 0 13px 1px 12px;
}
.nav-btn {
  width: 14px;
  color: #707070;
}
.nav-btn svg {
  width: 14px;
  height: 12px;
}
.nav-btn.off {
  color: #dcdcdc;
}
.nav-btn.forward {
  margin-left: 16px;
  transform: scaleX(-1);
}
.nav-btn.recent {
  width: 8px;
  margin-left: 13px;
}
.nav-btn.recent svg {
  width: 8px;
  height: 8px;
}
.nav-btn.up {
  margin: 0 6px 0 9px;
  transform: rotate(90deg);
}
.address {
  display: flex;
  flex: 1;
  align-items: center;
  height: 24px;
  padding-left: 2px;
  border: 1px solid #d9d9d9;
}
.address .chev {
  width: 5px;
  height: 8px;
  margin: 0 10px;
}
.address .icon + .chev {
  margin-left: 8px;
}
.history {
  width: 14px;
  margin-left: auto;
}
.history svg {
  width: 10px;
  height: 8px;
}
.refresh {
  width: 18px;
  height: 22px;
  border-left: 1px solid #d9d9d9;
}
.refresh svg {
  width: 12px;
  height: 12px;
}
.search {
  display: flex;
  align-items: center;
  width: 202px;
  height: 24px;
  margin-left: 12px;
  padding: 0 8px 0 9px;
  border: 1px solid #d9d9d9;
}
.search input {
  flex: 1;
  min-width: 0;
}
.search svg {
  width: 12px;
  height: 12px;
}
.search input::placeholder {
  color: #6d6d6d;
}

/* Panes */
.panes {
  display: flex;
  flex: 1;
  min-height: 0;
}
.tree {
  width: 159px;
  padding: 16px 2px 3px 0;
  border-right: 1px solid #f0f0f0;
}
.window-downloads .tree {
  width: 140px;
  padding-right: 1px;
  border: none;
  overflow: hidden;
}
.tree ul {
  margin: 0 0 8px;
  padding: 0;
  list-style: none;
}
.tree ul:last-child {
  margin-bottom: 0;
}
.tree a {
  display: flex;
  align-items: center;
  gap: 5px;
  height: 24px;
  padding: 0 3px 0 32px;
  overflow: hidden;
  white-space: nowrap;
}
.tree .root {
  padding-left: 24px;
}
.tree .child {
  padding: 0 0 0 40px;
}
.tree .selected {
  background: #d9d9d9;
}
.tree .pin {
  width: 10px;
  height: 10px;
  margin-left: auto;
}
.scrollbar {
  display: flex;
  flex-direction: column;
  width: 17px;
  padding-right: 1px;
  background: #f0f0f0;
}
.scrollbar button {
  flex: none;
  height: 17px;
  color: #505050;
}
.scrollbar .up {
  transform: scaleY(-1);
}
.scrollbar svg {
  width: 8px;
  height: 8px;
}
.thumb {
  background: #cdcdcd;
}
.thumb-tree {
  flex: 1;
  margin-bottom: 20px;
}
.thumb-files {
  height: 255px;
  margin-top: auto;
}

/* Downloads list */
.downloads {
  flex: 1;
  margin-left: 1px;
  border-left: 1px solid #f0f0f0;
}
.column-name {
  padding: 6px 0 0 18px;
  color: #4c607a;
}
.group {
  display: flex;
  align-items: center;
  gap: 3px;
  margin: 13px 0 6px 7px;
}
.group svg {
  width: 12px;
  height: 8px;
}
.group h2 {
  margin: 0;
  color: #1e3287;
  font-size: 15px;
  font-weight: normal;
  line-height: 20px;
}
.group::after {
  content: '';
  flex: 1;
  height: 1px;
  margin-left: 4px;
  background: #dedede;
}
.download-row {
  display: flex;
  align-items: center;
  gap: 3px;
  height: 22px;
  margin-left: 15px;
  padding-left: 5px;
  background: #d9d9d9;
}

/* File table, scrolled to its last row */
.files {
  display: flex;
  flex: 1;
  flex-direction: column;
  height: 476px;
  padding-left: 12px;
}
.files tr {
  display: grid;
  grid-template-columns: 261px 144px 120px 80px;
}
.files th {
  height: 27px;
  padding: 0 6px;
  border-right: 1px solid #e5e5e5;
  color: #4c607a;
  font-weight: normal;
  line-height: 28px;
  text-align: left;
}
.files .sorted {
  position: relative;
}
.sorted svg {
  position: absolute;
  top: 0;
  left: 126px;
  width: 9px;
  height: 5px;
}
.files tbody {
  display: flex;
  flex: 1;
  flex-direction: column;
  justify-content: flex-end;
  min-height: 0;
  padding-bottom: 1px;
  overflow: hidden;
}
.files td {
  display: flex;
  align-items: center;
  height: 21px;
  padding: 0 8px 0 6px;
  color: #6d6d6d;
  white-space: nowrap;
}
.files td:first-child {
  gap: 4px;
  padding-left: 7px;
  color: #000;
}
.files td:last-child {
  justify-content: flex-end;
}
.php-icon {
  width: 16px;
  height: 16px;
  background: #777bb3;
  color: #fff;
  font-size: 8px;
  font-style: italic;
  line-height: 14px;
  text-align: center;
}

/* Status bar */
.status {
  display: flex;
  align-items: center;
  height: 24px;
  padding: 0 5px 1px 14px;
  color: #1e395b;
}
.status span {
  margin-right: auto;
  padding-right: 10px;
  border-right: 1px solid #f0f0f0;
}
.view {
  width: 22px;
  height: 23px;
}
.view.active {
  border: 1px solid #26a0da;
  background: #cbe8f6;
}
.view svg {
  width: 18px;
  height: 14px;
}
.view:last-child svg {
  width: 14px;
  height: 11px;
}

/* Taskbar */
.taskbar {
  display: flex;
  height: 40px;
  background: linear-gradient(90deg, #21353f 0%, #35434b 28%, #2e3d47 50%, #223343 75%, #1a2842 100%);
  color: #fff;
}
.start {
  width: 48px;
}
.start svg {
  width: 16px;
  height: 16px;
}
.task-search {
  display: flex;
  align-items: center;
  width: 344px;
  padding: 0 4px 0 11px;
  border: 1px solid #bfbfbf;
  background: #f2f2f2;
}
.task-search .glass {
  width: 17px;
  height: 17px;
}
.task-search input {
  flex: 1;
  min-width: 0;
  margin-left: 11px;
  font-size: 14px;
}
.task-search input::placeholder {
  color: #2b2b2b;
}
.task-search .blossom {
  width: 70px;
  height: 38px;
}
.task {
  width: 49px;
  border-bottom: 2px solid transparent;
}
.task svg {
  width: 24px;
  height: 26px;
}
.task .task-view {
  width: 17px;
  height: 16px;
}
.task.running {
  width: 40px;
  margin: 0 5px 0 6px;
  border-bottom-color: #76b9ed;
}
.task.current {
  width: 48px;
  margin: 0;
  background: linear-gradient(90deg, #5b686f 44px, #2b383f 44px, #2b383f 45px, #47545b 45px);
}
.tray {
  display: flex;
  align-items: center;
  margin-left: auto;
}
.weather {
  gap: 9px;
  margin-right: 19px;
  font-size: 14px;
}
.weather svg {
  width: 25px;
  height: 25px;
}
.tray-icon {
  width: 24px;
}
.tray-icon svg {
  width: 16px;
  height: 16px;
}
.ime {
  width: 20px;
  font-size: 16px;
}
.clock {
  flex-direction: column;
  gap: 3px;
  width: 78px;
}
.notify {
  position: relative;
  width: 46px;
  height: 40px;
  margin-right: 4px;
  border-right: 1px solid #5d6a7c;
}
.notify svg {
  width: 16px;
  height: 16px;
  margin-right: 12px;
}
.badge {
  position: absolute;
  right: 13px;
  bottom: 4px;
  width: 17px;
  height: 17px;
  border: 1px solid #a5a8ac;
  border-radius: 50%;
  background: #2b2f36;
  font-size: 12px;
  line-height: 15px;
}
```
